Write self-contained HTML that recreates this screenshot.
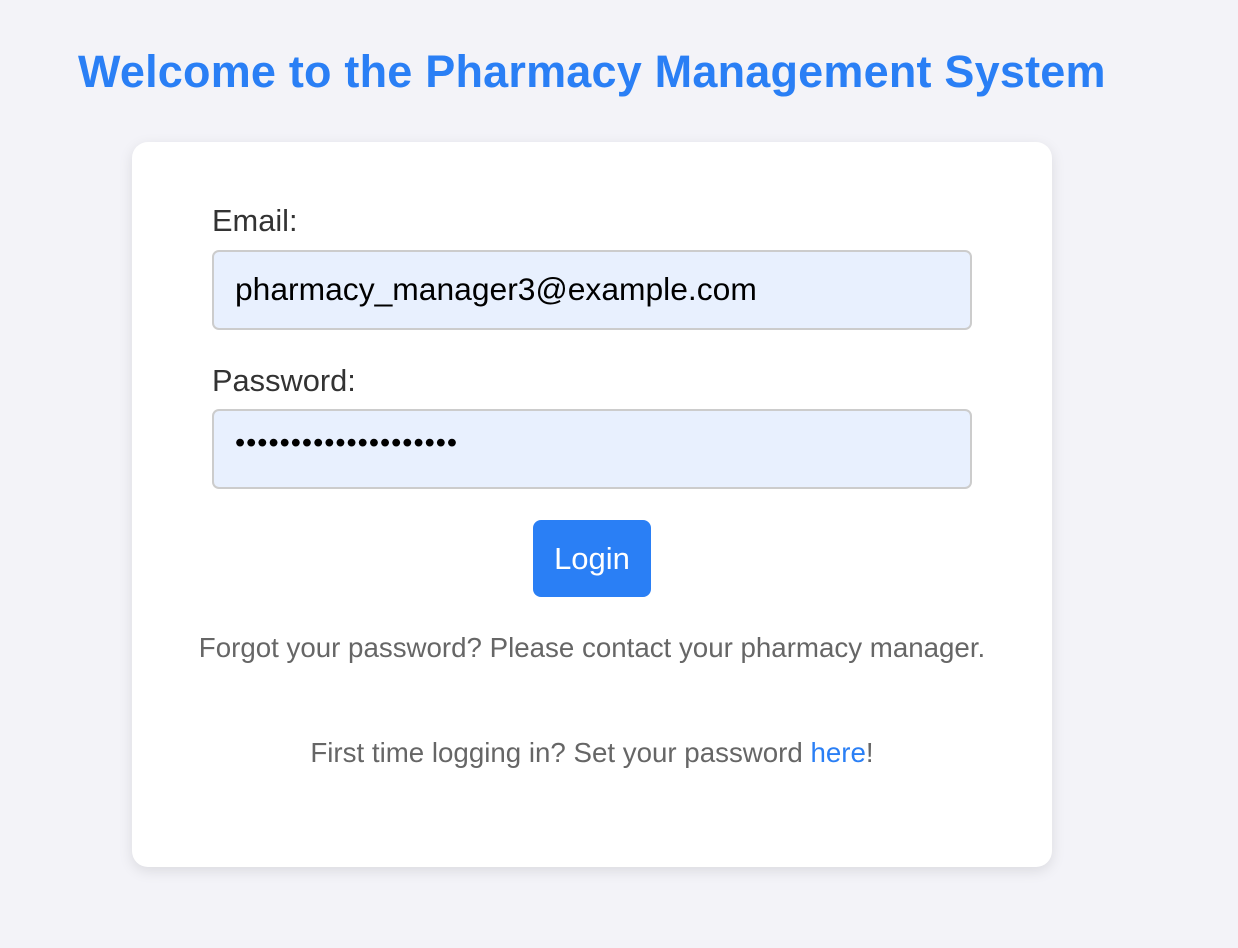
<!DOCTYPE html>
<html><head><style>
body{margin:0;background:#f3f3f8;width:1238px;height:948px;font-family:"Liberation Sans",sans-serif;position:relative;overflow:hidden}
h1{position:absolute;left:78px;top:46px;margin:0;font-size:45px;font-weight:bold;color:#2a7ff5;white-space:nowrap;letter-spacing:0.2px}
.card{position:absolute;left:132px;top:142px;width:920px;height:725px;background:#fff;border-radius:16px;box-shadow:0 4px 14px rgba(0,0,0,0.1)}
.lbl{position:absolute;left:80px;font-size:30.8px;color:#333}
.inp{position:absolute;left:80px;width:756px;height:76px;border:2px solid #ccc;border-radius:7px;background:#e8f0fe;box-sizing:content-box}
.inp span{position:absolute;left:21px;top:19px;font-size:31.8px;color:#000}
.btn{position:absolute;left:401px;top:378px;width:118px;height:77px;background:#2a7ff5;border-radius:8px;color:#fff;font-size:31px;text-align:center;line-height:77px}
.t{position:absolute;left:0;width:920px;text-align:center;font-size:27.7px;color:#666}
.t a{color:#2a7ff5;text-decoration:none}
</style></head><body>
<h1>Welcome to the Pharmacy Management System</h1>
<div class="card">
<div class="lbl" style="top:61px">Email:</div>
<div class="inp" style="top:108px"><span>pharmacy_manager3@example.com</span></div>
<div class="lbl" style="top:221px">Password:</div>
<div class="inp" style="top:267px"><span style="top:16px;font-size:29px;letter-spacing:1px">••••••••••••••••••••</span></div>
<div class="btn">Login</div>
<div class="t" style="top:490px">Forgot your password? Please contact your pharmacy manager.</div>
<div class="t" style="top:595px">First time logging in? Set your password <a>here</a>!</div>
</div>
</body></html>
